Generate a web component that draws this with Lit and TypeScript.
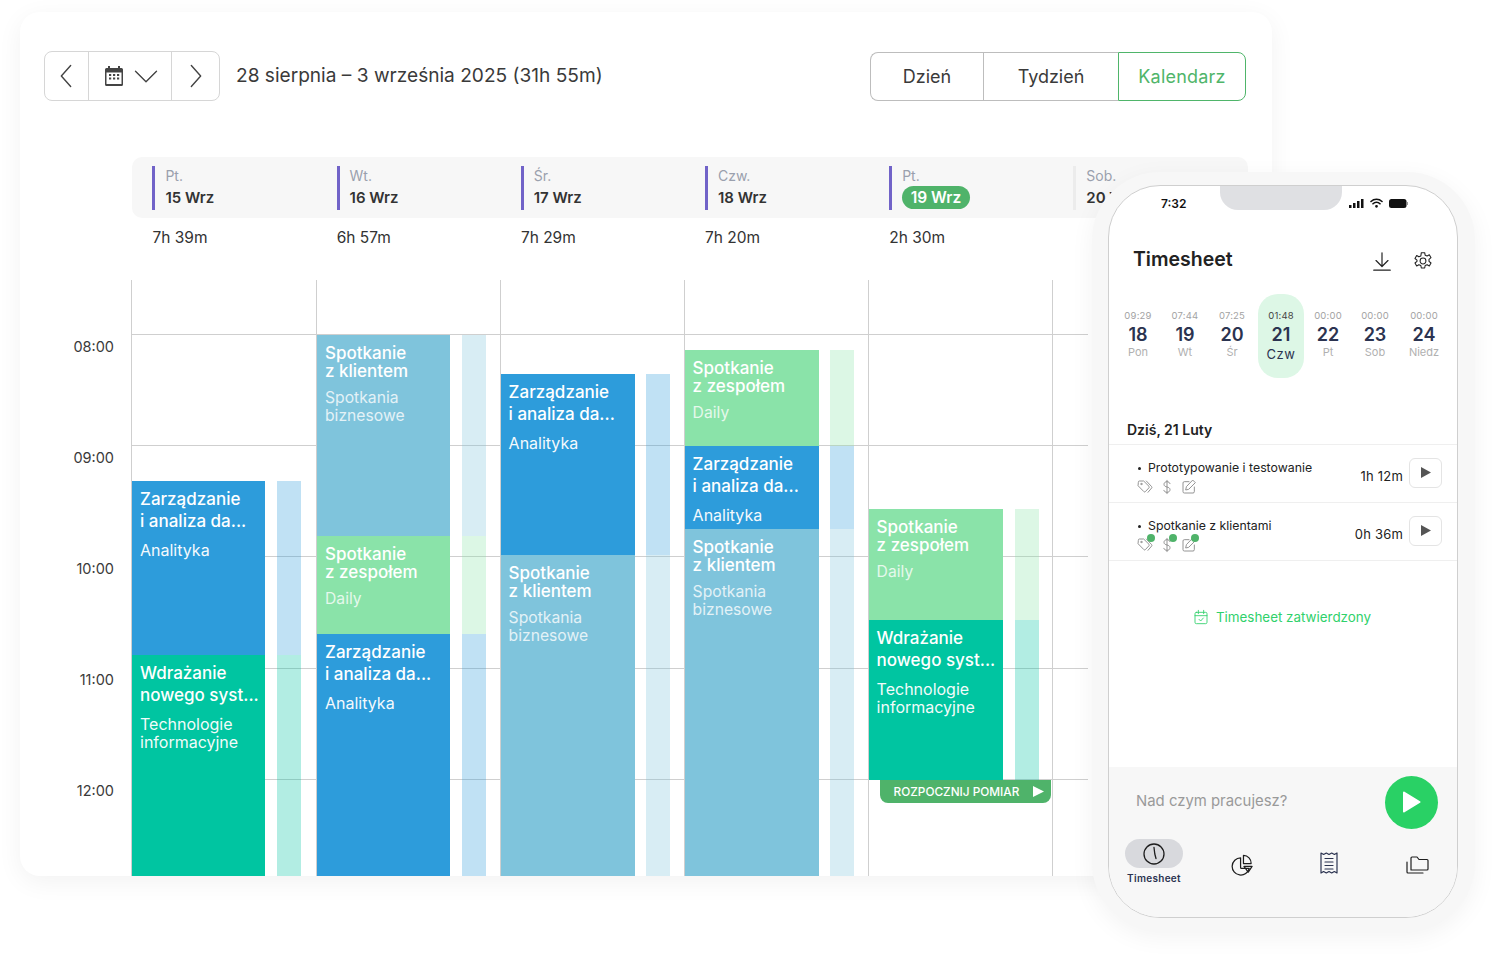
import { LitElement, html, css, svg } from "lit";
import { customElement } from "lit/decorators.js";

type Kind = "blue" | "teal" | "sky" | "mint";
interface Ev { y: number; end: number; kind: Kind; title: string[]; sub: string[]; tight?: boolean }

const GRID_TOP = 280;
const columns: { width: number; slot: number; evw: number; events: Ev[] }[] = [
  { width: 185, slot: 145, evw: 133, events: [
    { y: 481, end: 655, kind: "blue", title: ["Zarządzanie", "i analiza da..."], sub: ["Analityka"] },
    { y: 655, end: 876, kind: "teal", title: ["Wdrażanie", "nowego syst..."], sub: ["Technologie", "informacyjne"] },
  ]},
  { width: 183.6, slot: 145, evw: 133, events: [
    { y: 335, end: 536, kind: "sky", title: ["Spotkanie", "z klientem"], sub: ["Spotkania", "biznesowe"], tight: true },
    { y: 536, end: 634, kind: "mint", title: ["Spotkanie", "z zespołem"], sub: ["Daily"], tight: true },
    { y: 634, end: 876, kind: "blue", title: ["Zarządzanie", "i analiza da..."], sub: ["Analityka"] },
  ]},
  { width: 184, slot: 145, evw: 134, events: [
    { y: 374, end: 555, kind: "blue", title: ["Zarządzanie", "i analiza da..."], sub: ["Analityka"] },
    { y: 555, end: 876, kind: "sky", title: ["Spotkanie", "z klientem"], sub: ["Spotkania", "biznesowe"], tight: true },
  ]},
  { width: 184, slot: 145.4, evw: 134, events: [
    { y: 350, end: 446, kind: "mint", title: ["Spotkanie", "z zespołem"], sub: ["Daily"], tight: true },
    { y: 446, end: 529, kind: "blue", title: ["Zarządzanie", "i analiza da..."], sub: ["Analityka"] },
    { y: 529, end: 876, kind: "sky", title: ["Spotkanie", "z klientem"], sub: ["Spotkania", "biznesowe"], tight: true },
  ]},
  { width: 184, slot: 146.4, evw: 134, events: [
    { y: 509, end: 620, kind: "mint", title: ["Spotkanie", "z zespołem"], sub: ["Daily"], tight: true },
    { y: 620, end: 780, kind: "teal", title: ["Wdrażanie", "nowego syst..."], sub: ["Technologie", "informacyjne"] },
  ]},
];

const heads = [
  { d: "Pt.", n: "15 Wrz", t: "7h 39m" },
  { d: "Wt.", n: "16 Wrz", t: "6h 57m" },
  { d: "Śr.", n: "17 Wrz", t: "7h 29m" },
  { d: "Czw.", n: "18 Wrz", t: "7h 20m" },
  { d: "Pt.", n: "19 Wrz", t: "2h 30m", today: true },
  { d: "Sob.", n: "20 Wrz", t: "", off: true },
];

const days: [string, string, string, number, number][] = [
  ["09:29", "18", "Pon", 47, 0], ["07:44", "19", "Wt", 47, 0], ["07:25", "20", "Śr", 47, 0],
  ["01:48", "21", "Czw", 46, 2.5], ["00:00", "22", "Pt", 48, 0], ["00:00", "23", "Sob", 46, 0], ["00:00", "24", "Niedz", 52, 0],
];

const ico = (w: number, body: unknown, stroke = "currentColor", sw = 1.2, vb = 24) => html`<svg width=${w} height=${w} viewBox="0 0 ${vb} ${vb}" fill="none" stroke=${stroke} stroke-width=${sw} stroke-linecap="round" stroke-linejoin="round">${body}</svg>`;

const tag = svg`<path d="M2 4.500A1.500 1.500 0 0 1 3.500 3H10l8 8a1.500 1.500 0 0 1 0 2.100L12.500 19a1.500 1.500 0 0 1-2.100 0L2 10.500z"/><path d="M14 3l8 8.500a1.500 1.500 0 0 1 0 2L16.500 20"/><circle cx="6.500" cy="7.500" r="1"/>`;
const dollar = svg`<path d="M12 2v20"/><path d="M16.500 7c-.5-1.800-2.300-3-4.500-3-2.500 0-4.500 1.500-4.500 4s2 3.300 4.500 4 4.500 1.500 4.500 4-2 4-4.500 4-4.200-1.200-4.700-3"/>`;
const edit = svg`<path d="M12 4H5a2 2 0 0 0-2 2v13a2 2 0 0 0 2 2h13a2 2 0 0 0 2-2v-7"/><path d="M18 2l3.500 3.500-10 10-4.500 1 1-4.500z"/>`;

@customElement("app-root")
export class AppRoot extends LitElement {
  static styles = css`
    :host { display: block; position: relative; width: 1496px; height: 959px; overflow: hidden; background: #fff; font-family: Inter, "Noto Sans", sans-serif; color: #333; }
    .card { position: absolute; left: 20px; top: 12px; width: 1252px; height: 864px; background: #fff; border-radius: 20px; box-shadow: 0 6px 26px rgba(0,0,0,.055); overflow: hidden; display: flex; flex-direction: column; }
    .toolbar { flex: none; display: flex; align-items: center; padding: 39px 26px 0 24px; height: 50px; box-sizing: content-box; }
    .nav { display: flex; height: 50px; width: 176px; box-sizing: border-box; border: 1px solid #d6d6d6; border-radius: 8px; color: #444; }
    .nav > div { display: flex; align-items: center; justify-content: center; border-left: 1px solid #d6d6d6; }
    .nav > div:first-child { border-left: 0; width: 43px; padding-right: 2px; box-sizing: border-box; }
    .nav .mid { width: 83px; gap: 9px; box-sizing: border-box; padding-left: 4px; }
    .nav .nx { flex: 1; }
    .range { margin-left: 16px; font-size: 19.100px; color: #3a3a3a; flex: 1; margin-top: -2px; }
    .seg { display: flex; height: 49px; margin-top: 1px; }
    .seg div { display: flex; align-items: center; justify-content: center; font-size: 18px; color: #3a3a3a; border: 1px solid #bdbdbd; border-right: 0; box-sizing: border-box; }
    .seg .a { width: 113px; border-radius: 8px 0 0 8px; }
    .seg .b { width: 135px; }
    .seg .c { width: 128px; border: 1.5px solid #4fb56a; border-radius: 0 8px 8px 0; color: #4fb56a; letter-spacing: .2px; }
    .strip { flex: none; margin: 56px 24px 0 112px; height: 61px; background: #f7f7f7; border-radius: 10px; display: flex; padding: 9px 0 0 20.400px; box-sizing: border-box; overflow: hidden; }
    .hd { width: 184.200px; flex: none; border-left: 3px solid #7163c8; height: 44px; padding-left: 10px; box-sizing: border-box; white-space: nowrap; }
    .hd.off { border-left-color: #ececec; }
    .hd .d { font-size: 14px; line-height: 20px; color: #9aa0ad; }
    .hd .n { font-size: 15px; line-height: 24px; font-weight: 600; color: #333; }
    .hd .pill { display: inline-block; background: #4fb36a; color: #fff; border-radius: 12px; padding: 0 8.500px; height: 23px; line-height: 23px; font-size: 15.500px; font-weight: 600; }
    .totals { flex: none; display: flex; margin: 9px 0 0 132.500px; height: 22px; }
    .totals div { width: 184.200px; font-size: 15.500px; line-height: 22px; color: #333; }
    .body { margin-top: 31px; height: 596px; flex: none; display: flex; position: relative; }
    .labels { width: 94px; margin-right: 17px; padding-top: 54px; flex: none; }
    .labels div { height: 111px; text-align: right; font-size: 14.500px; line-height: 26px; color: #3a3a3a; }
    .rules { position: absolute; left: 111px; top: 54px; width: 957px; }
    .rules div { height: 111.200px; box-sizing: border-box; border-top: 1px solid #cfcfcf; }
    .cols { display: flex; flex: 1; position: relative; }
    .col { position: relative; flex: none; border-left: 1px solid #cfcfcf; box-sizing: border-box; height: 100%; }
    .ev { position: absolute; left: 0; box-sizing: border-box; padding: 7px 4px 0 8px; color: #fff; overflow: hidden; }
    .ev.blue { background: #2d9cdb; } .ev.teal { background: #00c5a1; } .ev.sky { background: #7fc4dc; } .ev.mint { background: #8ae3a9; }
    .sl { position: absolute; width: 24px; }
    .sl.blue { background: rgba(45,156,219,.3); } .sl.teal { background: rgba(0,197,161,.3); } .sl.sky { background: rgba(127,196,220,.3); } .sl.mint { background: rgba(138,227,169,.3); }
    .t { font-size: 17px; font-weight: 500; line-height: 22px; white-space: nowrap; }
    .ev.tight { padding-top: 9px; }
    .tight .t { line-height: 18px; }
    .s { font-size: 16px; line-height: 18px; margin-top: 9px; white-space: nowrap; opacity: .95; }
    .tight .s { margin-top: 9px; opacity: .78; font-size: 15.700px; }
    .start { position: absolute; left: 11px; top: 500px; width: 171px; height: 23px; background: #4fb36a; color: #fff; border-radius: 0 0 8px 8px; display: flex; align-items: center; justify-content: space-between; padding: 0 7px 0 14px; box-sizing: border-box; font-size: 11.800px; font-weight: 500; white-space: nowrap; }

    .bezel { position: absolute; left: 1092px; top: 172px; width: 383px; height: 759px; box-sizing: border-box; background: #f7f7f7; border-radius: 68px; box-shadow: 0 6px 24px rgba(0,0,0,.05); padding: 13px 17px 15px 16px; }
    .phone { position: relative; height: 100%; background: #fff; border: 1px solid #cfcfcf; border-radius: 52px; overflow: hidden; display: flex; flex-direction: column; }
    .notch { position: absolute; left: 111px; top: 0; width: 122px; height: 24px; background: #dfe0e3; border-radius: 0 0 18px 18px; }
    .status { height: 34px; display: flex; justify-content: space-between; align-items: center; padding: 0 49px 0 52px; font-size: 12px; font-weight: 600; color: #111; }
    .status .sig { display: flex; align-items: center; gap: 6px; }
    .title { display: flex; align-items: center; margin-top: 21px; padding: 0 24px 0 24px; height: 36px; }
    .title b { flex: 1; font-size: 19.500px; font-weight: 600; color: #222; }
    .title span { display: flex; margin-top: 4px; }
    .title .gear { margin-left: 20px; }
    .days { display: flex; margin: 17px 0 0 5.500px; height: 84px; }
    .day { display: flex; flex-direction: column; align-items: center; flex: none; padding-top: 16px; box-sizing: border-box; height: 84px; }
    .day.on { background: #ddf7e6; border-radius: 20px; }
    .day .h { font-size: 9.500px; line-height: 12px; color: #a3a3a3; letter-spacing: .2px; }
    .day.on .h { color: #444; }
    .day .n { font-size: 18px; line-height: 25px; font-weight: 600; color: #2b3350; }
    .day .w { font-size: 11px; line-height: 11px; color: #b0b0b0; }
    .day.on .w { font-size: 13px; line-height: 14px; color: #2b3350; letter-spacing: .5px; }
    .today { margin: 42px 0 0 18px; font-size: 14px; line-height: 20px; font-weight: 600; color: #222; }
    .rows { margin-top: 4px; border-top: 1.5px solid #efefef; }
    .row { height: 58px; box-sizing: border-box; border-bottom: 1.5px solid #efefef; padding: 0 15px 0 28px; display: flex; align-items: center; position: relative; }
    .row .m { flex: 1; align-self: flex-start; padding-top: 14px; }
    .row .nm { font-size: 12.300px; line-height: 18px; color: #222; position: relative; padding-left: 11px; white-space: nowrap; }
    .row .nm::before { content: ""; position: absolute; left: 1px; top: 8px; width: 3px; height: 3px; border-radius: 50%; background: #222; }
    .tools { display: flex; gap: 7px; margin-top: 2px; color: #8c8c8c; }
    .tool { position: relative; width: 15px; height: 16px; }
    .tool.dot::after { content: ""; position: absolute; right: -3px; top: -3px; width: 8px; height: 8px; border-radius: 50%; background: #4fb36a; }
    .dur { font-size: 13px; letter-spacing: .2px; color: #222; margin: 4px 6px 0 0; white-space: nowrap; }
    .play { width: 33px; height: 30px; box-sizing: border-box; border: 1px solid #e4e4e4; border-radius: 6px; display: flex; align-items: center; justify-content: center; margin-top: -2px; }
    .ok { margin-top: 46px; display: flex; justify-content: center; align-items: center; gap: 7px; font-size: 13.400px; color: #2fd16b; height: 20px; padding-right: 2px; }
    .bottom { margin-top: auto; height: 150px; background: #f7f7f7; display: flex; flex-direction: column; }
    .input { height: 72px; flex: none; display: flex; align-items: center; padding: 0 19px 0 27px; }
    .input span { flex: 1; font-size: 14.900px; color: #9a9a9a; margin-top: -4px; }
    .go { width: 53px; height: 53px; border-radius: 50%; background: #29d165; display: flex; align-items: center; justify-content: center; margin-top: -2px; }
    .tabs { display: flex; align-items: flex-start; position: relative; }
    .tab1 { margin-left: 16px; width: 58px; display: flex; flex-direction: column; align-items: center; }
    .pill2 { width: 58px; height: 29px; background: #d8d9dd; border-radius: 15px; display: flex; align-items: center; justify-content: center; color: #1e1e1e; }
    .tab1 span { font-size: 10px; font-weight: 600; color: #2b3350; margin-top: 4px; letter-spacing: .3px; line-height: 13px; white-space: nowrap; }
    .tab { color: #1e1e1e; flex: none; display: flex; }
    .t-pie { margin: 14px 0 0 48px; }
    .t-rec { margin: 12px 0 0 63px; }
    .t-fol { margin: 14px 0 0 64px; }
  `;

  private renderEvent(ev: Ev, w: number) {
    return html`<div class="ev ${ev.kind} ${ev.tight ? "tight" : ""}" style="top:${ev.y - GRID_TOP}px;height:${ev.end - ev.y}px;width:${w}px">
      <div class="t">${ev.title.map((l) => html`${l}<br />`)}</div>
      <div class="s">${ev.sub.map((l) => html`${l}<br />`)}</div>
    </div>`;
  }

  private renderRow(name: string, dur: string, dots: boolean) {
    const d = dots ? "dot" : "";
    return html`<div class="row">
      <div class="m">
        <div class="nm">${name}</div>
        <div class="tools">
          <div class="tool ${d}">${ico(16, tag, "currentColor", 1.4)}</div>
          <div class="tool ${d}">${ico(16, dollar, "currentColor", 1.4)}</div>
          <div class="tool ${d}">${ico(16, edit, "currentColor", 1.4)}</div>
        </div>
      </div>
      <div class="dur">${dur}</div>
      <div class="play"><svg width="10" height="11" viewBox="0 0 10 11"><path d="M0 0l10 5.500L0 11z" fill="#555"/></svg></div>
    </div>`;
  }

  render() {
    return html`
      <div class="card">
        <div class="toolbar">
          <div class="nav">
            <div>${ico(28, svg`<path d="M16 3l-8 9 8 9"/>`, "#444", 1.200)}</div>
            <div class="mid">
              <svg width="18" height="20" viewBox="0 0 18 20"><path fill="#444" d="M3 0h2v2h8V0h2v2h1.500A1.500 1.500 0 0 1 18 3.500v15a1.500 1.500 0 0 1-1.500 1.500h-15A1.500 1.500 0 0 1 0 18.500v-15A1.500 1.500 0 0 1 1.500 2H3z"/><path fill="#fff" d="M1.500 6.500h15V18h-15z"/><path fill="#444" d="M4 8h2.200v2H4zM8 8h2.200v2H8zM12 8h2.200v2H12zM4 11.500h2.200v2H4zM8 11.500h2.200v2H8zM12 11.500h2.200v2H12z"/></svg>
              ${ico(28, svg`<path d="M3 8l9 9 9-9"/>`, "#444", 1.200)}
            </div>
            <div class="nx">${ico(28, svg`<path d="M8 3l8 9-8 9"/>`, "#444", 1.200)}</div>
          </div>
          <div class="range">28 sierpnia – 3 września 2025 (31h 55m)</div>
          <div class="seg">
            <div class="a">Dzień</div><div class="b">Tydzień</div><div class="c">Kalendarz</div>
          </div>
        </div>
        <div class="strip">
          ${heads.map((h) => html`<div class="hd ${h.off ? "off" : ""}">
            <div class="d">${h.d}</div>
            ${h.today ? html`<div class="pill">${h.n}</div>` : html`<div class="n">${h.n}</div>`}
          </div>`)}
        </div>
        <div class="totals">${heads.slice(0, 5).map((h) => html`<div>${h.t}</div>`)}</div>
        <div class="body">
          <div class="rules">${[0, 1, 2, 3, 4].map(() => html`<div></div>`)}</div>
          <div class="labels">${["08:00", "09:00", "10:00", "11:00", "12:00"].map((l) => html`<div>${l}</div>`)}</div>
          <div class="cols">
            ${columns.map((c, i) => html`<div class="col" style="width:${c.width}px">
              ${c.events.map((e) => html`<div class="sl ${e.kind}" style="left:${c.slot}px;top:${e.y - GRID_TOP}px;height:${e.end - e.y}px"></div>`)}
              ${c.events.map((e) => this.renderEvent(e, c.evw))}
              ${i === 4 ? html`<div class="start">ROZPOCZNIJ POMIAR<svg width="11" height="11" viewBox="0 0 11 11"><path d="M0 0l11 5.500L0 11z" fill="#fff"/></svg></div>` : ""}
            </div>`)}
            <div class="col" style="width:36px"></div>
          </div>
        </div>
      </div>

      <div class="bezel">
        <div class="phone">
          <div class="notch"></div>
          <div class="status">
            <span>7:32</span>
            <div class="sig">
              <svg width="15" height="9" viewBox="0 0 15 9" fill="#111"><rect x="0" y="6" width="2.500" height="3"/><rect x="4" y="4" width="2.500" height="5"/><rect x="8" y="2" width="2.500" height="7"/><rect x="12" y="0" width="2.500" height="9"/></svg>
              <svg width="13" height="10" viewBox="0 0 13 10" fill="none" stroke="#111" stroke-width="1.600" stroke-linecap="round"><path d="M1 3.500a8 8 0 0 1 11 0M3 5.800a5 5 0 0 1 7 0"/><circle cx="6.500" cy="8.300" r=".6" fill="#111"/></svg>
              <svg width="19" height="9" viewBox="0 0 19 9"><rect x="0" y="0" width="17.500" height="9" rx="2.500" fill="#111"/><rect x="18" y="3" width="1" height="3" fill="#999"/></svg>
            </div>
          </div>
          <div class="title">
            <b>Timesheet</b>
            <span>${ico(22, svg`<path d="M12 3v15M5.500 11.500L12 18l6.500-6.500M3 22h18"/>`, "#222", 1.300)}</span>
            <span class="gear">${ico(20, svg`<path d="M12 8.500a3.500 3.500 0 1 0 0 7 3.500 3.500 0 0 0 0-7z"/><path d="M10 2h4l.6 3 2.300 1 2.700-1.500 2 3.500-2.400 2v2.400l2.400 2-2 3.500-2.700-1.500-2.300 1-.6 3h-4l-.6-3-2.300-1-2.700 1.500-2-3.500 2.400-2V11L2.400 9l2-3.500L7.100 7l2.300-1z"/>`, "#222", 1.300)}</span>
          </div>
          <div class="days">
            ${days.map((d) => html`<div class="day ${d[1] === "21" ? "on" : ""}" style="width:${d[3]}px;margin-left:${d[4]}px">
              <div class="h">${d[0]}</div><div class="n">${d[1]}</div><div class="w">${d[2]}</div>
            </div>`)}
          </div>
          <div class="today">Dziś, 21 Luty</div>
          <div class="rows">
            ${this.renderRow("Prototypowanie i testowanie", "1h 12m", false)}
            ${this.renderRow("Spotkanie z klientami", "0h 36m", true)}
          </div>
          <div class="ok">
            ${ico(16, svg`<rect x="3" y="5" width="18" height="17" rx="2"/><path d="M8 2v5M16 2v5M3 10h18M9 15.500l2.500 2.500 4-4.500"/>`, "#2fd16b", 1.300)}
            Timesheet zatwierdzony
          </div>
          <div class="bottom">
            <div class="input">
              <span>Nad czym pracujesz?</span>
              <div class="go"><svg width="19" height="22" viewBox="0 0 19 22"><path d="M2 1.500L17.500 11 2 20.500z" fill="#fff" stroke="#fff" stroke-width="2" stroke-linejoin="round"/></svg></div>
            </div>
            <div class="tabs">
              <div class="tab1">
                <div class="pill2">${ico(24, svg`<circle cx="12" cy="12" r="10"/><path d="M12 5.500l.8 6.500 1.200 4.500"/>`, "#1e1e1e", 1.300)}</div>
                <span>Timesheet</span>
              </div>
              <div class="tab t-pie">${ico(23, svg`<path d="M10 5a9 9 0 1 0 9 11h-8a1 1 0 0 1-1-1z"/><path d="M13 2.500a8 8 0 0 1 8 8.500h-8z"/><path d="M13.500 14h8.500l-4 6z"/>`, "#1e1e1e", 1.300)}</div>
              <div class="tab t-rec">${ico(24, svg`<path d="M4 2l2.700 1.500L9.300 2 12 3.500 14.700 2l2.700 1.500L20 2v20l-2.700-1.500L14.700 22 12 20.500 9.300 22l-2.700-1.500L4 22z"/><path d="M8 7.500h8M8 11h8M8 14.500h8M8 18h8"/>`, "#2b3350", 1.200)}</div>
              <div class="tab t-fol">${ico(24, svg`<path d="M6 7V5a1 1 0 0 1 1-1h5l2 2.500h8a1 1 0 0 1 1 1V16a1 1 0 0 1-1 1H6z"/><path d="M2 9v10a1 1 0 0 0 1 1h15"/>`, "#1e1e1e", 1.200)}</div>
            </div>
          </div>
        </div>
      </div>
    `;
  }
}
